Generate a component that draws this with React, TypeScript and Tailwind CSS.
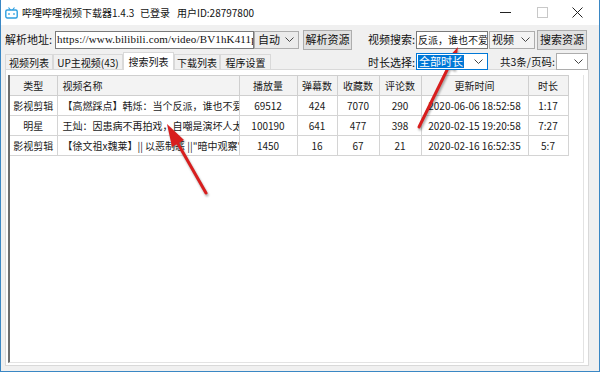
import React from 'react';

const Chevron = () => (
  <svg width="9" height="5" viewBox="0 0 9 5" className="shrink-0">
    <polyline points="0.5,0.5 4.5,4.5 8.5,0.5" fill="none" stroke="#444" strokeWidth="1" />
  </svg>
);

const rows = [
  ['影视剪辑', '【高燃踩点】韩烁：当个反派，谁也不爱', '69512', '424', '7070', '290', '2020-06-06 18:52:58', '1:17'],
  ['明星', '王灿：因患病不再拍戏，自嘲是演坏人太多', '100190', '641', '477', '398', '2020-02-15 19:20:58', '7:27'],
  ['影视剪辑', '【徐文祖x魏莱】|| 以恶制恶 ||"暗中观察"', '1450', '16', '67', '21', '2020-02-16 16:52:35', '5:7'],
];

const heads = ['类型', '视频名称', '播放量', '弹幕数', '收藏数', '评论数', '更新时间', '时长'];
const widths = ['w-[47px]', 'w-[182px]', 'w-[58px]', 'w-[40px]', 'w-[42px]', 'w-[42px]', 'w-[107px]', 'w-[40px]'];

const tabs = [
  { label: '视频列表', w: 'w-[48px]' },
  { label: 'UP主视频(43)', w: 'w-[70px]' },
  { label: '搜索列表', w: 'w-[51px]', active: true },
  { label: '下载列表', w: 'w-[46px]' },
  { label: '程序设置', w: 'w-[51px]' },
];

export default function App() {
  return (
    <div className="relative w-[600px] h-[372px] flex flex-col bg-[#f0f0f0] border-x border-b border-[#3a87c4] font-['Noto_Sans_CJK_SC',sans-serif] text-[#111] overflow-hidden">
      {/* Title bar */}
      <div className="h-[25px] shrink-0 bg-white flex items-center text-[10px] whitespace-nowrap">
        <svg width="13" height="12" viewBox="0 0 13 12" className="ml-[4px] mr-[4px]">
          <line x1="3.5" y1="0.5" x2="5.5" y2="3" stroke="#2e9fe0" strokeWidth="1.2" />
          <line x1="9.5" y1="0.5" x2="7.5" y2="3" stroke="#2e9fe0" strokeWidth="1.2" />
          <rect x="0.8" y="3" width="11.4" height="8" rx="1.5" fill="none" stroke="#2e9fe0" strokeWidth="1.4" />
          <line x1="4" y1="6" x2="4" y2="8" stroke="#2e9fe0" strokeWidth="1.2" />
          <line x1="9" y1="6" x2="9" y2="8" stroke="#2e9fe0" strokeWidth="1.2" />
        </svg>
        <span className="w-[118px]">哔哩哔哩视频下载器1.4.3</span>
        <span className="w-[37px]">已登录</span>
        <span>用户ID:28797800</span>
        <div className="ml-auto flex items-center h-full">
          <svg width="11" height="11" viewBox="0 0 11 11" className="mr-[26px]">
            <line x1="0" y1="5.5" x2="11" y2="5.5" stroke="#222" strokeWidth="1" />
          </svg>
          <svg width="11" height="11" viewBox="0 0 11 11" className="mr-[24px]">
            <rect x="0.5" y="0.5" width="10" height="10" fill="none" stroke="#c8c8c8" strokeWidth="1" />
          </svg>
          <svg width="11" height="11" viewBox="0 0 11 11" className="mr-[16px]">
            <line x1="0.5" y1="0.5" x2="10.5" y2="10.5" stroke="#222" strokeWidth="1" />
            <line x1="10.5" y1="0.5" x2="0.5" y2="10.5" stroke="#222" strokeWidth="1" />
          </svg>
        </div>
      </div>

      {/* Body */}
      <div className="flex-1 flex flex-col px-[4px] text-[11px] whitespace-nowrap">
        {/* Row 1 */}
        <div className="mt-[5px] flex items-center h-[19px]">
          <div className="w-[363px] shrink-0 flex items-center">
            <span className="w-[50px]">解析地址:</span>
            <div className="w-[199px] h-[18px] bg-white border border-[#7a7a7a] overflow-hidden flex items-center pl-[1px] font-['Liberation_Serif',serif] text-[11px] tracking-[0.15px]">
              https://www.bilibili.com/video/BV1hK411p
            </div>
            <div className="w-[45px] h-[18px] bg-[#ebebeb] border border-[#adadad] flex items-center justify-between pl-[3px] pr-[4px]">
              <span>自动</span>
              <Chevron />
            </div>
            <button className="ml-[4px] w-[49px] h-[20px] bg-[#e1e1e1] border border-[#adadad] text-[11px] flex items-center justify-center">
              解析资源
            </button>
          </div>
          <span className="w-[48px]">视频搜索:</span>
          <div className="w-[72px] h-[18px] bg-white border border-[#7a7a7a] overflow-hidden flex items-center pl-[1px] text-[10px]">
            反派，谁也不爱
          </div>
          <div className="ml-[1px] w-[46px] h-[18px] bg-[#f3f3f3] border border-[#adadad] flex items-center justify-between pl-[2px] pr-[4px]">
            <span>视频</span>
            <Chevron />
          </div>
          <button className="ml-[2px] w-[50px] h-[20px] bg-[#e1e1e1] border border-[#adadad] text-[11px] flex items-center justify-center">
            搜索资源
          </button>
        </div>

        {/* Row 2 */}
        <div className="mt-[3px] flex items-start h-[17px] relative z-10">
          <div className="w-[363px] shrink-0 flex items-end h-[18px] text-[10px]">
            {tabs.map((t) =>
              t.active ? (
                <div
                  key={t.label}
                  className={`${t.w} h-[18px] bg-white border-x border-t border-[#d9d9d9] flex items-center justify-center`}
                >
                  {t.label}
                </div>
              ) : (
                <div
                  key={t.label}
                  className={`${t.w} h-[15px] mb-[1px] bg-[#f0f0f0] border-x border-t border-[#d9d9d9] flex items-center justify-center`}
                >
                  {t.label}
                </div>
              )
            )}
          </div>
          <span className="w-[48px] mt-[2px]">时长选择:</span>
          <div className="mt-[1px] w-[72px] h-[17px] bg-white border border-[#0078d7] flex items-center justify-between pl-[1px] pr-[4px]">
            <span className="bg-[#0078d7] text-white leading-[13px] px-[1px]">全部时长</span>
            <Chevron />
          </div>
          <span className="ml-[12px] w-[55px] mt-[2px] text-[10.5px]">共3条/页码:</span>
          <div className="mt-[1px] ml-[1px] w-[32px] h-[17px] bg-white border border-[#adadad] flex items-center justify-end pr-[4px]">
            <Chevron />
          </div>
        </div>

        {/* Tab panel */}
        <div className="h-[297px] shrink-0 w-[584px] bg-white border border-[#d9d9d9] pt-[5px] pl-[2px] pr-[4px] pb-[2px] flex">
          <div className="flex-1 border-l-2 border-l-[#6e6e6e] border-r border-r-[#e3e3e3] border-b border-b-[#e3e3e3]">
            <table className="table-fixed border-collapse w-[558px] text-[10px] text-[#1a1a1a]">
              <colgroup>
                {widths.map((w, i) => (
                  <col key={i} className={w} />
                ))}
              </colgroup>
              <thead>
                <tr className="h-[20px] bg-[#f3f3f3]">
                  {heads.map((h, i) => (
                    <th
                      key={h}
                      className={`font-normal border border-[#cfcfcf] ${i === 0 ? 'border-l-0' : ''} ${
                        i === 1 ? 'text-left pl-[5px]' : 'text-center'
                      }`}
                    >
                      {h}
                    </th>
                  ))}
                </tr>
              </thead>
              <tbody>
                {rows.map((r, ri) => (
                  <tr key={ri} className="h-[20px]">
                    {r.map((c, i) => (
                      <td
                        key={i}
                        className={`border border-[#d4d4d4] ${i === 0 ? 'border-l-0' : ''} whitespace-nowrap overflow-hidden ${
                          i === 1 ? 'text-left pl-[5px]' : 'text-center'
                        }`}
                      >
                        {c}
                      </td>
                    ))}
                  </tr>
                ))}
              </tbody>
            </table>
          </div>
        </div>
      </div>

      {/* Red annotation arrows */}
      <svg
        width="600"
        height="372"
        viewBox="0 0 600 372"
        className="absolute left-0 top-0 pointer-events-none drop-shadow-[1px_2px_1px_rgba(0,0,0,0.35)]"
      >
        <line x1="418" y1="127" x2="448" y2="66" stroke="#d81e1e" strokeWidth="3" strokeLinecap="round" />
        <polygon points="457,47 454,70 441,64" fill="#d81e1e" />
        <line x1="205" y1="193" x2="176" y2="142" stroke="#d81e1e" strokeWidth="3" strokeLinecap="round" />
        <polygon points="166,124 183,140 171,147" fill="#d81e1e" />
      </svg>
    </div>
  );
}
